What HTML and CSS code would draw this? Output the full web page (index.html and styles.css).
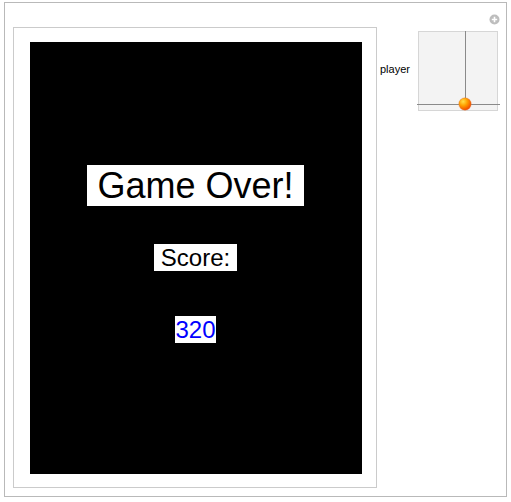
FILE: index.html
```html
<!DOCTYPE html>
<html>
<head>
<meta charset="utf-8">
<link rel="stylesheet" href="styles.css">
</head>
<body>
<div class="frame">
  <svg class="close" width="11" height="11" viewBox="0 0 11 11">
    <circle cx="5.5" cy="5.5" r="5" fill="#bdbdbd"/>
    <path d="M5.5 2.8V8.2M2.8 5.5H8.2" stroke="#fff" stroke-width="1.6"/>
  </svg>
  <div class="panel">
    <div class="screen">
      <span class="title"> Game Over! </span>
      <span class="label"> Score: </span>
      <span class="score">320</span>
    </div>
  </div>
  <div class="controls">
    <span class="ctl-label">player</span>
    <svg class="slider" width="83" height="81" viewBox="0 0 83 81">
      <rect x="1.5" y="0.5" width="79" height="79" fill="#f3f3f3" stroke="#d6d6d6"/>
      <defs>
        <radialGradient id="ball" cx="0.35" cy="0.3" r="0.75">
          <stop offset="0" stop-color="#ffe04a"/>
          <stop offset="0.45" stop-color="#ffa000"/>
          <stop offset="1" stop-color="#f04000"/>
        </radialGradient>
      </defs>
      <line x1="48.5" y1="0" x2="48.5" y2="73" stroke="#8a8a8a"/>
      <line x1="0" y1="73.5" x2="83" y2="73.5" stroke="#8a8a8a"/>
      <circle cx="48" cy="73" r="6.2" fill="url(#ball)" stroke="#e07a3a" stroke-width="0.4"/>
    </svg>
  </div>
</div>
</body>
</html>
```

FILE: styles.css
```css
html, body {
  margin: 0;
  padding: 0;
  background: #fff;
}

.frame {
  position: relative;
  box-sizing: border-box;
  margin: 2px 0 0 4px;
  width: 503px;
  height: 495px;
  border: 1px solid #b9b9b9;
  padding: 24px 0 0 8px;
  display: flex;
  align-items: flex-start;
  font-family: "Liberation Sans", Arial, sans-serif;
}

.close {
  position: absolute;
  top: 11px;
  right: 6px;
}

.panel {
  box-sizing: border-box;
  width: 364px;
  height: 461px;
  border: 1px solid #cbcbcb;
  padding: 14px 0 0 16px;
}

.screen {
  width: 332px;
  height: 432px;
  background: #000;
  display: flex;
  flex-direction: column;
  align-items: center;
  padding-top: 123px;
  box-sizing: border-box;
  padding-right: 1px;
}

.title, .label, .score {
  display: inline-block;
  background: #fff;
  white-space: pre;
  color: #000;
}

.title {
  font-size: 36px;
  line-height: 41px;
}

.label {
  margin-top: 38px;
  font-size: 24px;
  line-height: 27px;
}

.score {
  margin-top: 45px;
  font-size: 24px;
  line-height: 27px;
  color: #0000ff;
}

.controls {
  display: flex;
  align-items: center;
  margin-top: 4px;
  margin-left: 3px;
}

.ctl-label {
  font-size: 11px;
  color: #000;
  width: 37px;
  margin-top: -5px;
}

.slider {
  display: block;
}
```
